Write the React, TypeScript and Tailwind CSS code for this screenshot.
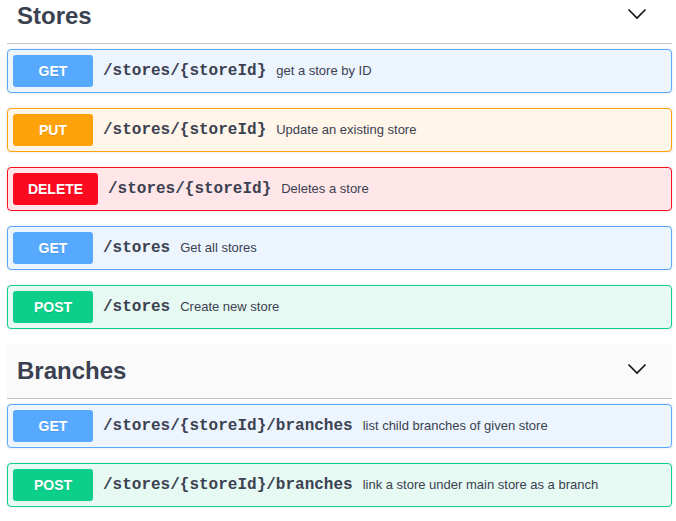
type Method = "GET" | "PUT" | "DELETE" | "POST";

interface Operation {
  method: Method;
  path: string;
  summary: string;
}

const styles: Record<Method, { block: string; badge: string }> = {
  GET: { block: "border-[#5aa9ff] bg-[#ecf4fe]", badge: "bg-[#57a8ff] min-w-[80px]" },
  PUT: { block: "border-[#ffa30d] bg-[#fff5e9]", badge: "bg-[#ffa20a] min-w-[80px]" },
  DELETE: { block: "border-[#fc0d22] bg-[#ffe6e8]", badge: "bg-[#fc0a20] min-w-[85px]" },
  POST: { block: "border-[#0fd08b] bg-[#e6f9f2]", badge: "bg-[#0ccf8a] min-w-[80px]" },
};

const stores: Operation[] = [
  { method: "GET", path: "/stores/{storeId}", summary: "get a store by ID" },
  { method: "PUT", path: "/stores/{storeId}", summary: "Update an existing store" },
  { method: "DELETE", path: "/stores/{storeId}", summary: "Deletes a store" },
  { method: "GET", path: "/stores", summary: "Get all stores" },
  { method: "POST", path: "/stores", summary: "Create new store" },
];

const branches: Operation[] = [
  { method: "GET", path: "/stores/{storeId}/branches", summary: "list child branches of given store" },
  { method: "POST", path: "/stores/{storeId}/branches", summary: "link a store under main store as a branch" },
];

function Chevron() {
  return (
    <svg width="20" height="12" viewBox="0 0 20 12" fill="none" aria-hidden="true" className="-mt-[4px]">
      <path d="M1.5 1.5 L10 10 L18.5 1.5" stroke="#111" strokeWidth="1.6" />
    </svg>
  );
}

function OpBlock({ op }: { op: Operation }) {
  const s = styles[op.method];
  return (
    <div
      className={`mb-[15px] flex h-[44px] items-center rounded-[4px] border px-[5px] shadow-[0_0_3px_rgba(0,0,0,0.12)] ${s.block}`}
    >
      <span
        className={`flex h-[32px] items-center justify-center rounded-[3px] px-[10px] text-[14px] font-bold text-white [text-shadow:0_1px_0_rgba(0,0,0,0.1)] ${s.badge}`}
      >
        {op.method}
      </span>
      <span className="px-[10px] font-['Liberation_Mono',monospace] text-[16px] font-bold text-[#3b4151]">
        {op.path}
      </span>
      <span className="text-[13px] text-[#3b4151]">{op.summary}</span>
    </div>
  );
}

function TagSection({ title, ops, hovered }: { title: string; ops: Operation[]; hovered?: boolean }) {
  return (
    <section>
      <div
        className={`mb-[5px] flex h-[55px] items-center justify-between border-b border-[#c4c5c9] pl-[10px] pr-[25px] ${
          hovered ? "bg-[#fafafa]" : ""
        }`}
      >
        <h4 className="text-[24px] font-bold text-[#3b4151]">{title}</h4>
        <Chevron />
      </div>
      {ops.map((op, i) => (
        <OpBlock key={i} op={op} />
      ))}
    </section>
  );
}

export default function App() {
  return (
    <div className="min-h-screen bg-white font-['Liberation_Sans',Arial,sans-serif]">
      <div className="-mt-[11px] pl-[7px] pr-[4px]">
        <TagSection title="Stores" ops={stores} />
        <TagSection title="Branches" ops={branches} hovered />
      </div>
    </div>
  );
}
